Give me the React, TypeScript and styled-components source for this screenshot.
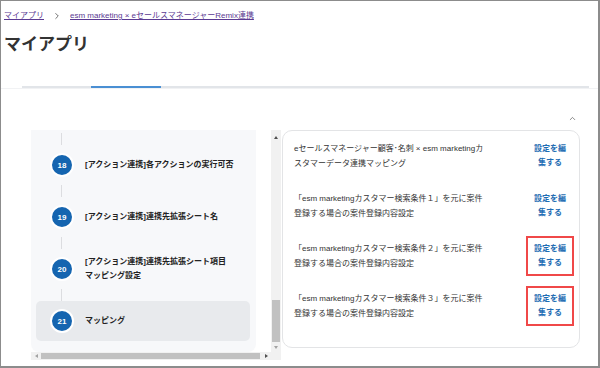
import React, {useEffect, useRef} from 'react';
import styled, {createGlobalStyle} from 'styled-components';
import {ChevronRight, ChevronUp} from 'lucide-react';

const GlobalStyle = createGlobalStyle`
  body {
    margin: 0;
    font-family: "Liberation Sans", "Noto Sans CJK JP", sans-serif;
    background: #fff;
  }
`;

const Frame = styled.div`
  width: 600px;
  height: 368px;
  box-sizing: border-box;
  border: 1px solid #8c8c8c;
  border-right-width: 2px;
  border-bottom-width: 2px;
  overflow: hidden;
  background: #fff;
`;
const Header = styled.header`
  padding: 8px 0 0 3px;
`;
const Breadcrumb = styled.nav`
  display: flex;
  align-items: center;
  gap: 8px;
  height: 14px;
  font-size: 8px;
  line-height: 14px;
  color: #555;
  > a {
    color: #5b3a92;
    text-decoration: underline;
  }
`;
const Title = styled.h1`
  margin: 11px 0 0;
  font-size: 17px;
  line-height: 22px;
  font-weight: bold;
  color: #333;
`;
const TabArea = styled.div`
  margin-top: 30px;
  display: flex;
  border-bottom: 1px solid #f1f2f4;
`;
const TabTrack = styled.div`
  flex: 1;
  display: flex;
  height: 2px;
  margin: 0 9px 0 21px;
  background: #e2e5e9;
`;
const Tab = styled.div<{ $active?: boolean; $w: number }>`
  width: ${p => p.$w}px;
  height: 2px;
  background: ${p => (p.$active ? '#4a8fd3' : 'transparent')};
`;
const CaretRow = styled.div`
  margin-top: 24px;
  height: 10px;
  display: flex;
  justify-content: flex-end;
  align-items: center;
  padding-right: 21px;
  color: #666;
`;
const Content = styled.div`
  margin-top: 7px;
  padding-left: 30px;
  display: flex;
  align-items: flex-start;
`;

/* left column: scroll viewport + drawn scrollbars */
const ScrollFrame = styled.div`
  display: grid;
  grid-template-columns: 240px 10px;
  grid-template-rows: 222px 8px;
`;
const Viewport = styled.div`
  overflow: auto;
  scrollbar-width: none;
  &::-webkit-scrollbar {
    display: none;
  }
`;
const ScrollInner = styled.div`
  width: 250px;
`;
const VBar = styled.div`
  display: flex;
  flex-direction: column;
  padding-top: 2px;
  background: #f1f1f1;
`;
const HBar = styled.div`
  display: flex;
  background: #f1f1f1;
`;
const Corner = styled.div`
  background: #f1f1f1;
`;
const BarButton = styled.div<{ $dir: 'up' | 'down' | 'left' | 'right' }>`
  flex: none;
  width: 10px;
  height: ${p => (p.$dir === 'up' || p.$dir === 'down' ? '10px' : '8px')};
  display: flex;
  align-items: center;
  justify-content: center;
  &::before {
    content: '';
    width: 0;
    height: 0;
    border: 2px solid transparent;
    ${p => p.$dir === 'up' && 'border-bottom: 3px solid #505050; border-top-width: 0;'}
    ${p => p.$dir === 'down' && 'border-top: 3px solid #a3a3a3; border-bottom-width: 0;'}
    ${p => p.$dir === 'left' && 'border-right: 3px solid #a3a3a3; border-left-width: 0;'}
    ${p => p.$dir === 'right' && 'border-left: 3px solid #505050; border-right-width: 0;'}
  }
`;
const VTrack = styled.div`
  flex: 1;
  display: flex;
  flex-direction: column;
  justify-content: flex-end;
  padding: 0 1px;
`;
const VThumb = styled.div`
  height: 42px;
  background: #c1c1c1;
`;
const HTrack = styled.div`
  flex: 1;
  display: flex;
  align-items: center;
  padding: 0 1px 0 0;
`;
const HThumb = styled.div`
  flex: 1;
  height: 6px;
  background: #c1c1c1;
`;

const StepPanel = styled.ol`
  list-style: none;
  margin: 0;
  width: 225px;
  box-sizing: border-box;
  padding: 12px 6px 11px 5px;
  background: #f7f8fa;
  border-radius: 0 0 8px 8px;
`;
const Connector = styled.li`
  height: 12px;
  margin-left: 25px;
  width: 1px;
  background: #dcdde0;
`;
const Step = styled.li<{ $current?: boolean }>`
  display: flex;
  align-items: center;
  gap: 11px;
  height: 40px;
  padding-left: 14px;
  border-radius: 5px;
  background: ${p => (p.$current ? '#e8eaed' : 'transparent')};
`;
const StepNo = styled.span`
  flex: none;
  width: 20px;
  height: 20px;
  border: 2px solid #fff;
  border-radius: 50%;
  background: #1565b0;
  color: #fff;
  font-size: 8px;
  font-weight: bold;
  display: flex;
  align-items: center;
  justify-content: center;
`;
const StepLabel = styled.span`
  font-size: 8px;
  line-height: 14px;
  font-weight: bold;
  color: #222;
  white-space: pre-line;
`;

/* right column: mapping card */
const Card = styled.section`
  margin-left: 1px;
  width: 298px;
  box-sizing: border-box;
  border: 1px solid #e3e4e6;
  border-radius: 10px;
  padding: 5px 5px 21px 11px;
  display: flex;
  flex-direction: column;
  gap: 10px;
`;
const MapRow = styled.div`
  display: flex;
  justify-content: space-between;
  align-items: flex-start;
`;
const MapText = styled.p`
  margin: 0;
  padding-top: 6px;
  width: 205px;
  font-size: 8px;
  line-height: 14.5px;
  color: #333;
  white-space: pre-line;
`;
const EditLink = styled.a<{ $marked?: boolean }>`
  display: block;
  width: 32px;
  padding: 4px 6px;
  border: 2px solid ${p => (p.$marked ? '#f04848' : 'transparent')};
  font-size: 8px;
  line-height: 14px;
  font-weight: bold;
  color: #1f6db3;
  text-align: center;
  text-decoration: none;
`;

const steps = [
  '[基本設定]連携アプリの選択',
  '[基本設定]接続先の設定',
  '[基本設定]連携ユーザーの設定',
  '[顧客連携]連携対象の設定',
  '[顧客連携]項目マッピング',
  '[名刺連携]連携対象の設定',
  '[名刺連携]項目マッピング',
  '[案件連携]連携対象の設定',
  '[案件連携]項目マッピング',
  '[案件連携]登録条件の設定',
  '[商談連携]連携対象の設定',
  '[商談連携]項目マッピング',
  '[アクション連携]連携対象の設定',
  '[アクション連携]アクション種別',
  '[アクション連携]実行条件の設定',
  '[アクション連携]通知先の設定',
  '[アクション連携]実行タイミング',
  '[アクション連携]各アクションの実行可否',
  '[アクション連携]連携先拡張シート名',
  '[アクション連携]連携先拡張シート項目\nマッピング設定',
  'マッピング'
];

const mappings = [
  {text: 'eセールスマネージャー顧客･名刺 × esm marketingカ\nスタマーデータ連携マッピング', marked: false},
  {text: '「esm marketingカスタマー検索条件１」を元に案件\n登録する場合の案件登録内容設定', marked: false},
  {text: '「esm marketingカスタマー検索条件２」を元に案件\n登録する場合の案件登録内容設定', marked: true},
  {text: '「esm marketingカスタマー検索条件３」を元に案件\n登録する場合の案件登録内容設定', marked: true}
];

function App() {
  const scrollRef = useRef<HTMLDivElement>(null);
  useEffect(() => {
    const el = scrollRef.current;
    if (el) el.scrollTop = el.scrollHeight;
  }, []);

  return (
    <Frame>
      <GlobalStyle/>
      <Header>
        <Breadcrumb>
          <a href="#">マイアプリ</a>
          <ChevronRight size={10} strokeWidth={2}/>
          <a href="#">esm marketing × eセールスマネージャーRemix連携</a>
        </Breadcrumb>
        <Title>マイアプリ</Title>
      </Header>
      <TabArea>
        <TabTrack>
          <Tab $w={69}/>
          <Tab $w={70} $active/>
        </TabTrack>
      </TabArea>
      <CaretRow>
        <ChevronUp size={9} strokeWidth={2}/>
      </CaretRow>
      <Content>
        <ScrollFrame>
          <Viewport ref={scrollRef}>
            <ScrollInner>
              <StepPanel>
                {steps.map((label, i) =>
                  <React.Fragment key={i}>
                    {i > 0 && <Connector/>}
                    <Step $current={i === steps.length - 1}>
                      <StepNo>{i + 1}</StepNo>
                      <StepLabel>{label}</StepLabel>
                    </Step>
                  </React.Fragment>
                )}
              </StepPanel>
            </ScrollInner>
          </Viewport>
          <VBar>
            <BarButton $dir="up"/>
            <VTrack><VThumb/></VTrack>
            <BarButton $dir="down"/>
          </VBar>
          <HBar>
            <BarButton $dir="left"/>
            <HTrack><HThumb/></HTrack>
            <BarButton $dir="right"/>
          </HBar>
          <Corner/>
        </ScrollFrame>
        <Card>
          {mappings.map(m =>
            <MapRow key={m.text}>
              <MapText>{m.text}</MapText>
              <EditLink href="#" $marked={m.marked}>設定を編集する</EditLink>
            </MapRow>
          )}
        </Card>
      </Content>
    </Frame>
  );
}

export default App;
